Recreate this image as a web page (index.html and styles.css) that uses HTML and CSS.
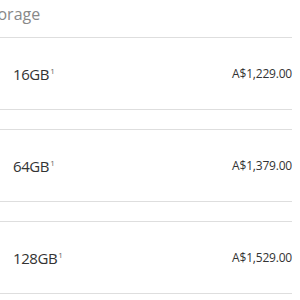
FILE: index.html
```html
<!DOCTYPE html>
<html lang="en">
<head>
  <meta charset="UTF-8" />
  <title>Storage</title>
  <link rel="stylesheet" href="styles.css">
</head>
<body>

  <section class="storage">
    <h3 class="storage-title">Storage</h3>

    <div class="option">
      <div class="option-size">16GB<sup>1</sup></div>
      <div class="option-price">A$1,229.00</div>
    </div>

    <div class="option">
      <div class="option-size">64GB<sup>1</sup></div>
      <div class="option-price">A$1,379.00</div>
    </div>

    <div class="option">
      <div class="option-size">128GB<sup>1</sup></div>
      <div class="option-price">A$1,529.00</div>
    </div>
  </section>

</body>
</html>
```

FILE: styles.css
```css
body {
  margin: 0;
  font-family: 'Open Sans', sans-serif;
  background-color: #fff;
  color: #333;
}

.storage {
  margin-left: -17px;
  margin-right: 8px;
}

.storage-title {
  margin: 0;
  height: 37px;
  padding-top: 3px;
  box-sizing: border-box;
  font-size: 16px;
  font-weight: normal;
  color: #888;
}

.option {
  display: flex;
  align-items: center;
  justify-content: space-between;
  height: 73px;
  box-sizing: border-box;
  padding: 0 0 0 30px;
  margin-bottom: 19px;
  border-top: 1px solid #dedede;
  border-bottom: 1px solid #dedede;
}

.option-size {
  font-size: 15px;
  letter-spacing: -0.4px;
}

.option-size sup {
  font-size: 8px;
  color: #666;
  margin-left: 1px;
  vertical-align: 6px;
}

.option-price {
  font-size: 12px;
  letter-spacing: -0.2px;
}
```
